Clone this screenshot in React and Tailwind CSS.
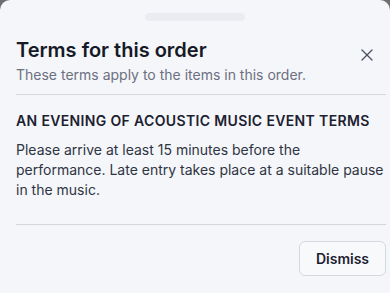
import React from 'react';
import { X } from 'lucide-react';

const App = () => {
  return (
    <div className="w-[390px] h-[293px] bg-[#6e6e6e] overflow-hidden" style={{ fontFamily: 'Inter, "Noto Sans", sans-serif' }}>
      <div className="h-full bg-[#f5f6fa] rounded-t-[10px] pl-4 pr-1 flex flex-col">
        {/* Handle */}
        <div className="pt-[13px] flex justify-center pr-3">
          <div className="w-[100px] h-2 rounded-full bg-[#ebecf1]" />
        </div>

        {/* Header */}
        <div className="flex items-start justify-between mt-[15px]">
          <div>
            <h2 className="text-[20px] leading-[28px] font-semibold text-[#151a27]">Terms for this order</h2>
            <p className="text-sm leading-5 mt-[1px] text-[#6b7080]">These terms apply to the items in this order.</p>
          </div>
          <button className="mt-[9px] mr-[9px] text-[#4b5060]">
            <X size={20} strokeWidth={1.5} />
          </button>
        </div>

        <div className="h-px bg-[#d5d7dd] mt-[9px]" />

        {/* Content */}
        <div className="pt-[16px]">
          <h3 className="text-sm leading-5 font-semibold tracking-wide text-[#1c2130]">AN EVENING OF ACOUSTIC MUSIC EVENT TERMS</h3>
          <p className="text-sm leading-5 mt-[9px] text-[#2e3442]">
            Please arrive at least 15 minutes before the performance. Late entry takes place at a suitable pause in the music.
          </p>
        </div>

        <div className="h-px bg-[#d5d7dd] mt-[24px]" />

        {/* Footer */}
        <div className="flex justify-end mt-4">
          <button className="h-[35px] w-[87px] rounded-md border border-[#d5d8de] bg-[#f8f9fb] text-sm font-semibold text-[#1c2130]">
            Dismiss
          </button>
        </div>
      </div>
    </div>
  );
};

export default App;
